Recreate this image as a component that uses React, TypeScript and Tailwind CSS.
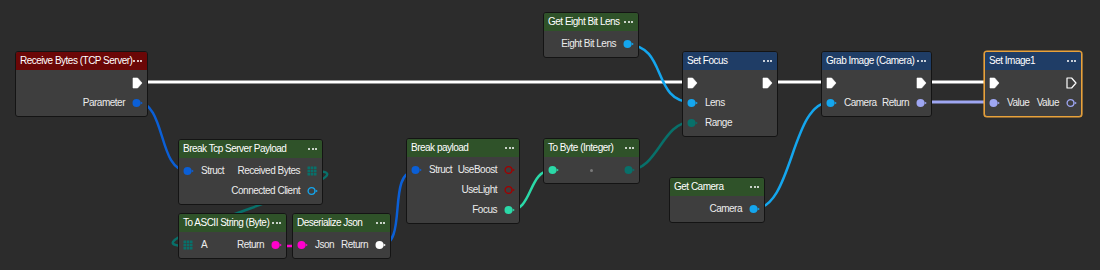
import React from "react";

type PinKind = "exec" | "execHollow" | "data" | "hollow" | "grid";
interface Pin {
  kind: PinKind;
  color?: string;
  label?: string;
}
interface Row {
  l?: Pin;
  r?: Pin;
  center?: boolean;
}
interface NodeDef {
  title: string;
  pos: string;
  header: string;
  rows: Row[];
  selected?: boolean;
}

const BLUE = "#0b5fd6";
const LBLUE = "#14a6ee";
const TEAL = "#08706a";
const CYAN = "#2bd9a8";
const MAG = "#ff00cc";
const LAV = "#9ea6f2";
const RED = "#a00000";

const RED_H = "bg-[#6b0707]";
const GREEN_H = "bg-[#2f5229]";
const BLUE_H = "bg-[#1f3d66]";

function PinIcon({ pin }: { pin: Pin }) {
  const c = pin.color || "#ffffff";
  if (pin.kind === "exec" || pin.kind === "execHollow") {
    const hollow = pin.kind === "execHollow";
    return (
      <svg width="11" height="12" viewBox="0 0 11 12" className="shrink-0">
        <path
          d="M1 1 H5.6 L10 6 L5.6 11 H1 Z"
          fill={hollow ? "none" : "#ffffff"}
          stroke="#ffffff"
          strokeWidth={hollow ? 1.2 : 0.6}
          strokeLinejoin="round"
        />
      </svg>
    );
  }
  if (pin.kind === "grid") {
    const cells = [];
    for (let i = 0; i < 3; i++)
      for (let j = 0; j < 3; j++)
        cells.push(<rect key={`${i}-${j}`} x={0.5 + i * 3.2} y={0.5 + j * 3.2} width="2.6" height="2.6" fill={c} />);
    return (
      <svg width="11" height="11" viewBox="0 0 11 11" className="shrink-0">
        {cells}
      </svg>
    );
  }
  const hollow = pin.kind === "hollow";
  return (
    <svg width="11" height="10" viewBox="0 0 11 10" className="shrink-0">
      {hollow ? (
        <circle cx="4.5" cy="5" r="3.4" fill="none" stroke={c} strokeWidth="1.3" />
      ) : (
        <circle cx="4.5" cy="5" r="4" fill={c} />
      )}
      <path d="M8.6 3.4 L10.8 5 L8.6 6.6 Z" fill={c} />
    </svg>
  );
}

function Dots() {
  return (
    <div className="flex items-center gap-[1.5px]">
      <div className="h-[2px] w-[2px] rounded-full bg-white" />
      <div className="h-[2px] w-[2px] rounded-full bg-white" />
      <div className="h-[2px] w-[2px] rounded-full bg-white" />
    </div>
  );
}

function Node({ n }: { n: NodeDef }) {
  return (
    <div
      className={`absolute ${n.pos} rounded-[3px] border ${
        n.selected ? "border-[#e9a23b] shadow-[0_0_0_0.6px_#e9a23b]" : "border-[#141414]"
      } bg-[#3e3e3e]`}
    >
      <div className={`flex h-[18px] items-center justify-between rounded-t-[2px] pl-[4px] pr-[5px] ${n.header}`}>
        <span className="whitespace-nowrap text-white">{n.title}</span>
        <Dots />
      </div>
      <div className="flex flex-col px-[4px] py-[3px]">
        {n.rows.map((r, i) => (
          <div key={i} className="flex h-[20px] items-center justify-between">
            <div className="flex items-center gap-[7px]">
              {r.l && <PinIcon pin={r.l} />}
              {r.l?.label && <span className="whitespace-nowrap text-[#ececec]">{r.l.label}</span>}
            </div>
            {r.center && <div className="h-[3px] w-[3px] rounded-full bg-[#7a7a7a]" />}
            <div className="flex items-center gap-[7px]">
              {r.r?.label && <span className="whitespace-nowrap text-[#ececec]">{r.r.label}</span>}
              {r.r && <PinIcon pin={r.r} />}
            </div>
          </div>
        ))}
      </div>
    </div>
  );
}

const nodes: NodeDef[] = [
  {
    title: "Receive Bytes (TCP Server)",
    pos: "left-[15px] top-[51px] w-[133px]",
    header: RED_H,
    rows: [{ r: { kind: "exec" } }, { r: { kind: "data", color: BLUE, label: "Parameter" } }],
  },
  {
    title: "Break Tcp Server Payload",
    pos: "left-[178px] top-[139px] w-[145px]",
    header: GREEN_H,
    rows: [
      { l: { kind: "data", color: BLUE, label: "Struct" }, r: { kind: "grid", color: TEAL, label: "Received Bytes" } },
      { r: { kind: "hollow", color: LBLUE, label: "Connected Client" } },
    ],
  },
  {
    title: "To ASCII String (Byte)",
    pos: "left-[178px] top-[213px] w-[109px]",
    header: GREEN_H,
    rows: [{ l: { kind: "grid", color: TEAL, label: "A" }, r: { kind: "data", color: MAG, label: "Return" } }],
  },
  {
    title: "Deserialize Json",
    pos: "left-[292px] top-[213px] w-[99px]",
    header: GREEN_H,
    rows: [{ l: { kind: "data", color: MAG, label: "Json" }, r: { kind: "data", color: "#ffffff", label: "Return" } }],
  },
  {
    title: "Break payload",
    pos: "left-[406px] top-[138px] w-[114px]",
    header: GREEN_H,
    rows: [
      { l: { kind: "data", color: BLUE, label: "Struct" }, r: { kind: "hollow", color: RED, label: "UseBoost" } },
      { r: { kind: "hollow", color: RED, label: "UseLight" } },
      { r: { kind: "data", color: CYAN, label: "Focus" } },
    ],
  },
  {
    title: "Get Eight Bit Lens",
    pos: "left-[543px] top-[12px] w-[96px]",
    header: GREEN_H,
    rows: [{ r: { kind: "data", color: LBLUE, label: "Eight Bit Lens" } }],
  },
  {
    title: "To Byte (Integer)",
    pos: "left-[543px] top-[138px] w-[97px]",
    header: GREEN_H,
    rows: [{ l: { kind: "data", color: CYAN }, r: { kind: "data", color: TEAL }, center: true }],
  },
  {
    title: "Set Focus",
    pos: "left-[682px] top-[51px] w-[96px]",
    header: BLUE_H,
    rows: [
      { l: { kind: "exec" }, r: { kind: "exec" } },
      { l: { kind: "data", color: LBLUE, label: "Lens" } },
      { l: { kind: "data", color: TEAL, label: "Range" } },
    ],
  },
  {
    title: "Get Camera",
    pos: "left-[669px] top-[177px] w-[96px]",
    header: GREEN_H,
    rows: [{ r: { kind: "data", color: LBLUE, label: "Camera" } }],
  },
  {
    title: "Grab Image (Camera)",
    pos: "left-[821px] top-[51px] w-[111px]",
    header: BLUE_H,
    rows: [
      { l: { kind: "exec" }, r: { kind: "exec" } },
      { l: { kind: "data", color: LBLUE, label: "Camera" }, r: { kind: "data", color: LAV, label: "Return" } },
    ],
  },
  {
    title: "Set Image1",
    pos: "left-[984px] top-[51px] w-[98px]",
    header: BLUE_H,
    selected: true,
    rows: [
      { l: { kind: "exec" }, r: { kind: "execHollow" } },
      { l: { kind: "data", color: LAV, label: "Value" }, r: { kind: "hollow", color: LAV, label: "Value" } },
    ],
  },
];

function bez(x1: number, y1: number, x2: number, y2: number, d: number) {
  return `M${x1} ${y1} C${x1 + d} ${y1} ${x2 - d} ${y2} ${x2} ${y2}`;
}

const wires: { d: string; c: string; w: number }[] = [
  { d: "M140 82 L690 82", c: "#ffffff", w: 3 },
  { d: "M770 82 L829 82", c: "#ffffff", w: 3 },
  { d: "M925 82 L992 82", c: "#ffffff", w: 3 },
  { d: bez(136.5, 102, 187.5, 171, 30), c: BLUE, w: 2.5 },
  { d: bez(313, 171, 187, 246, 80), c: TEAL, w: 2.5 },
  { d: "M275 246 L301 246", c: MAG, w: 2.5 },
  { d: bez(379.5, 246, 415.5, 171, 30), c: BLUE, w: 2.5 },
  { d: bez(508.5, 211, 552.5, 170, 25), c: CYAN, w: 2.5 },
  { d: bez(628.5, 170, 691.5, 122, 30), c: TEAL, w: 2.5 },
  { d: bez(627.5, 45, 691.5, 102, 40), c: LBLUE, w: 2.5 },
  { d: bez(753.5, 209, 830.5, 102, 40), c: LBLUE, w: 2.5 },
  { d: "M920 102 L993 102", c: LAV, w: 3 },
];

export default function App() {
  return (
    <div className="relative h-[270px] w-[1100px] overflow-hidden bg-[#2c2c2c] font-['Liberation_Sans',Arial,sans-serif] text-[10px] leading-none tracking-[-0.5px]">
      <svg className="absolute left-0 top-0" width="1100" height="270" viewBox="0 0 1100 270">
        {wires.map((w, i) => (
          <path key={i} d={w.d} stroke={w.c} strokeWidth={w.w} fill="none" strokeLinecap="round" />
        ))}
      </svg>
      {nodes.map((n) => (
        <Node key={n.title} n={n} />
      ))}
    </div>
  );
}
